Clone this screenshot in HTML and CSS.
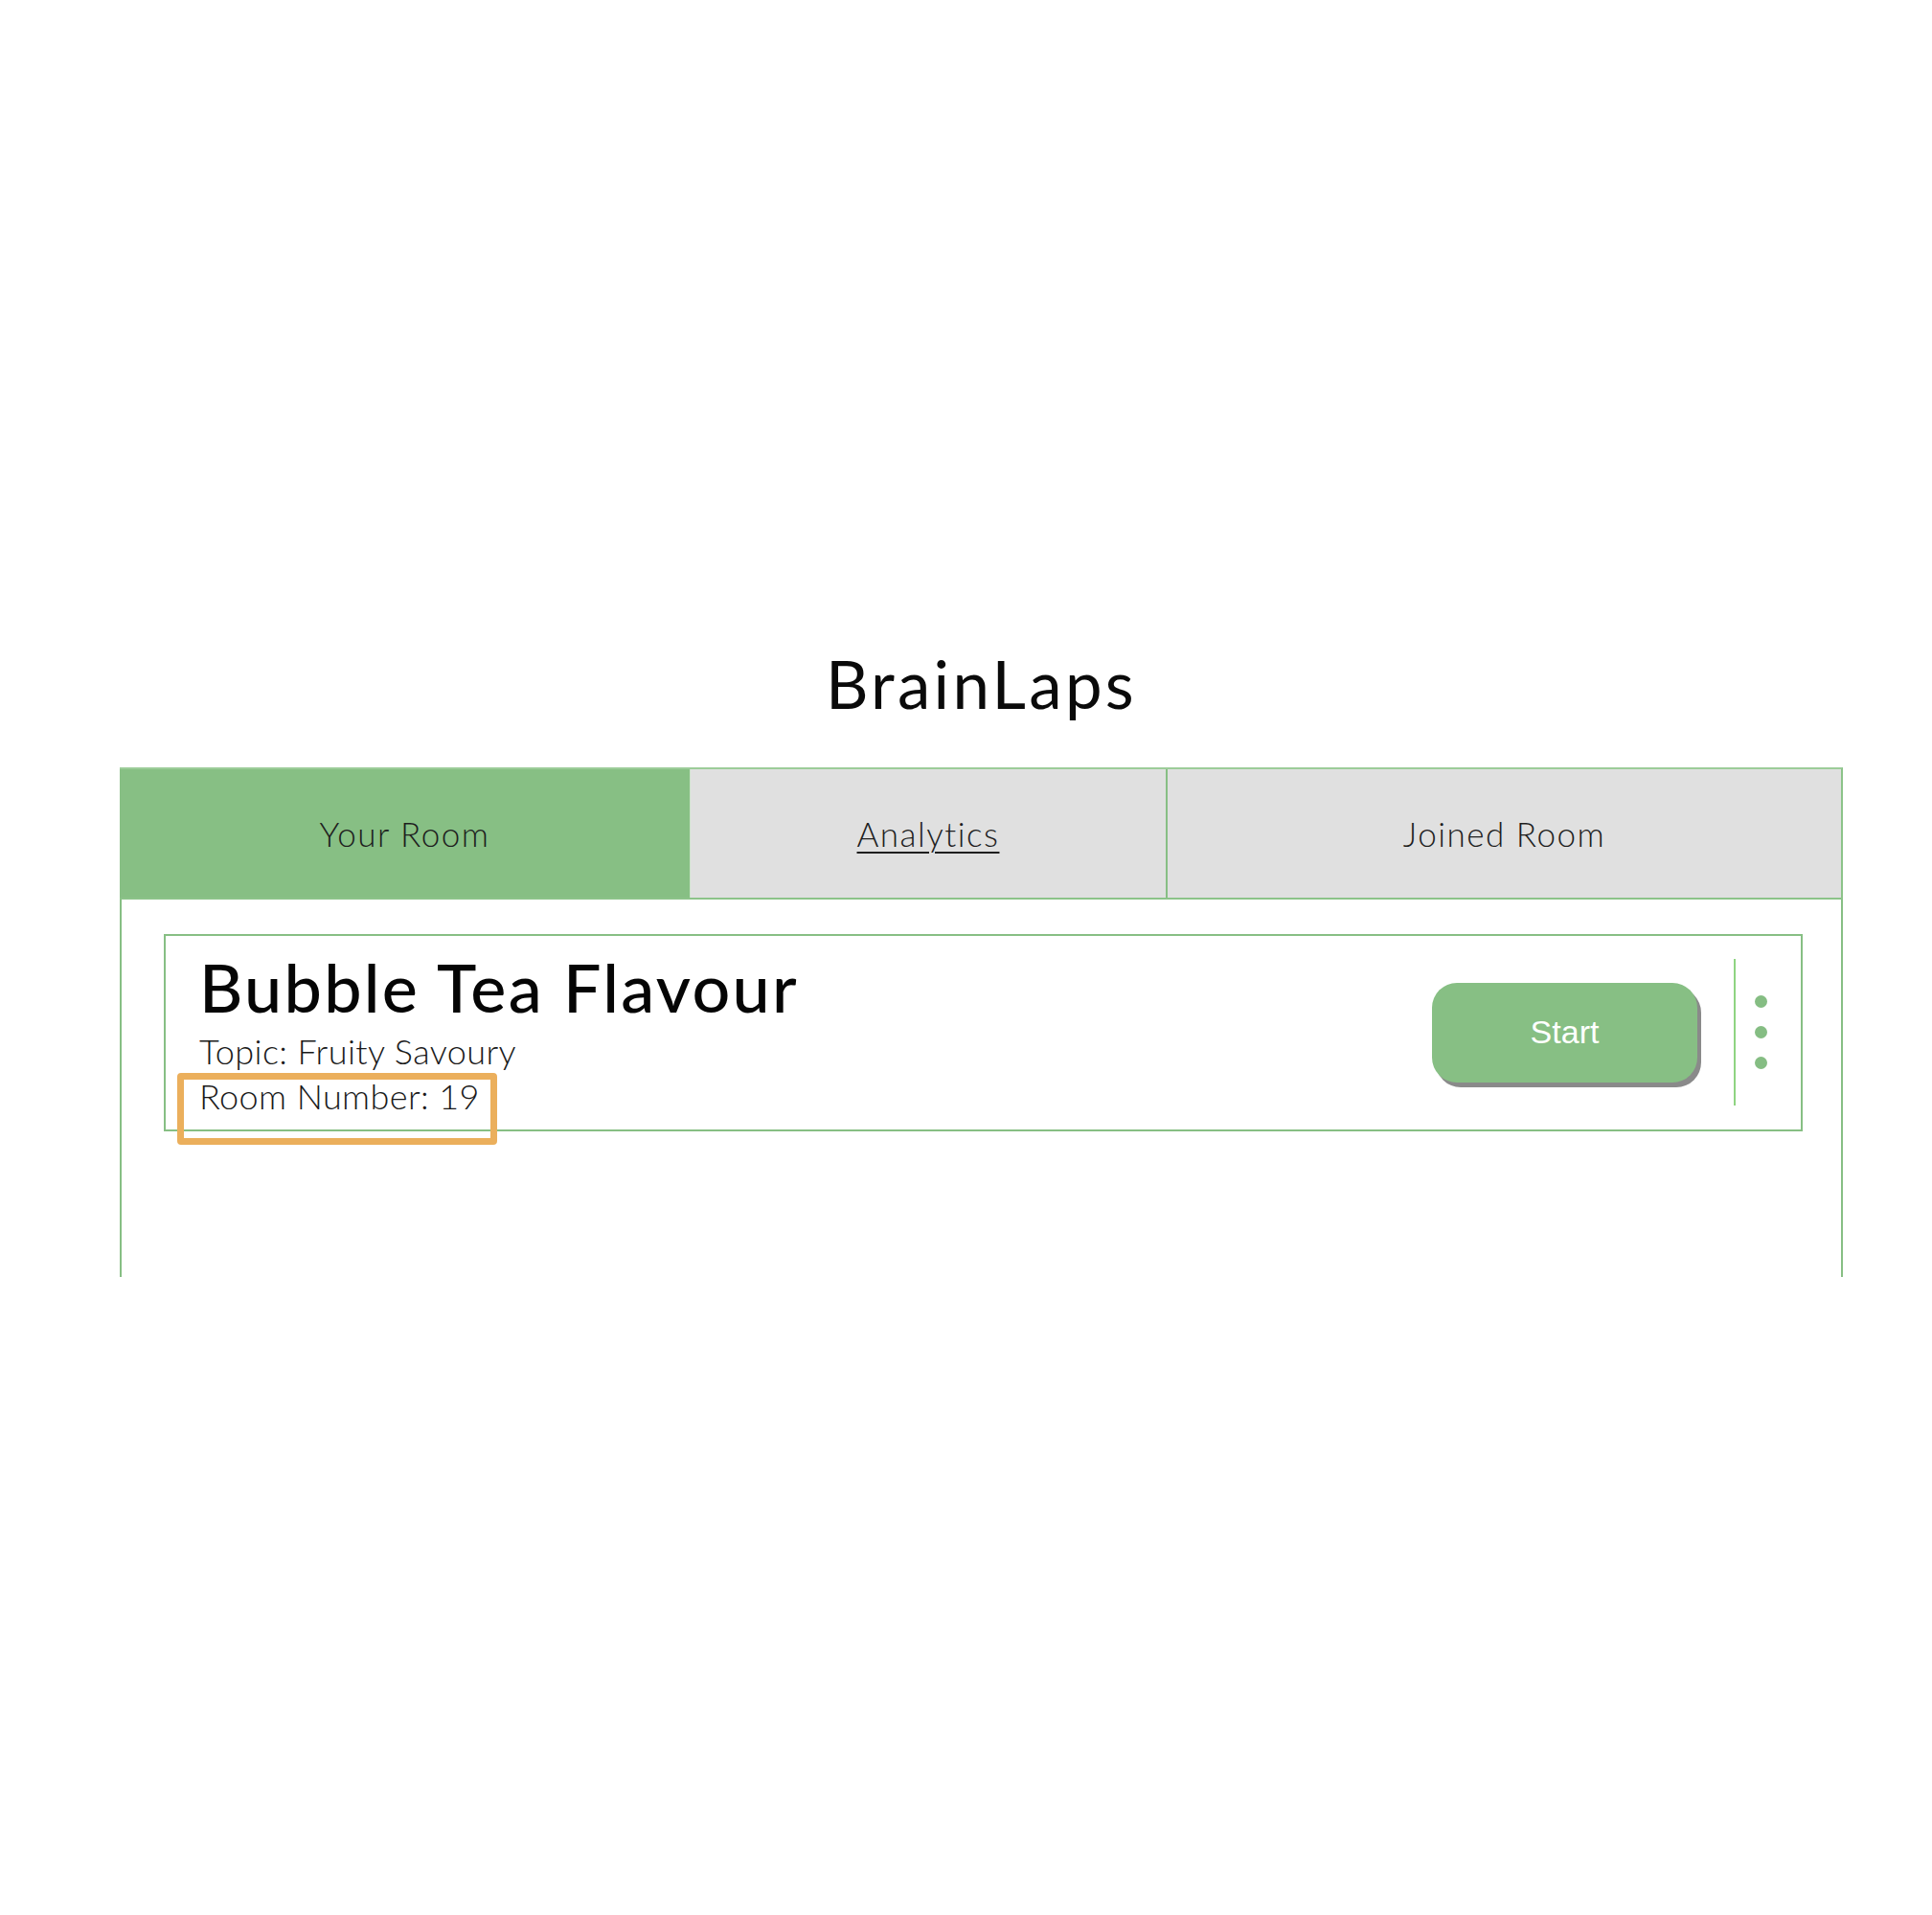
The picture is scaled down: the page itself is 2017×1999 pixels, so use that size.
FILE: index.html
```html
<!DOCTYPE html>
<html lang="en">
<head>
<meta charset="utf-8">
<title>BrainLaps</title>
<link rel="stylesheet" href="styles.css">
</head>
<body>
<div class="page">
  <h1 class="brand">BrainLaps</h1>
  <div class="tabs">
    <div class="tab tab-active">Your Room</div>
    <div class="tab tab-analytics"><span class="tab-link">Analytics</span></div>
    <div class="tab tab-joined">Joined Room</div>
  </div>
  <div class="panel">
    <div class="card">
      <div class="card-info">
        <div class="card-title">Bubble Tea Flavour</div>
        <div class="card-line">Topic: Fruity Savoury</div>
        <div class="card-line room-line">Room Number: 19<span class="highlight"></span></div>
      </div>
      <div class="card-actions">
        <button class="start-btn">Start</button>
        <div class="divider"></div>
        <div class="dots"><span class="dot"></span><span class="dot"></span><span class="dot"></span></div>
      </div>
    </div>
  </div>
</div>
</body>
</html>
```

FILE: styles.css
```css
html, body {
  margin: 0;
  padding: 0;
  background: #ffffff;
}

body {
  font-family: Lato, "Open Sans", "Noto Sans", sans-serif;
  color: #111;
}

.page {
  width: 1799px;
  margin-left: 125px;
  padding-top: 680px;
}

.brand {
  margin: 0;
  font-size: 69px;
  line-height: 68px;
  height: 121px;
  font-weight: 400;
  letter-spacing: 3.3px;
  text-align: center;
  color: #0a0a0a;
}

.tabs {
  display: flex;
  height: 138px;
  box-sizing: border-box;
  border-top: 2px solid #9ccc99;
  border-right: 2px solid #8cc389;
  border-bottom: 2px solid #8cc389;
}

.tab {
  display: flex;
  align-items: center;
  justify-content: center;
  font-size: 35px;
  font-weight: 300;
  letter-spacing: 1.5px;
  color: #1e1e1e;
  background: #e0e0e0;
  box-sizing: border-box;
}

.tab-active {
  width: 595px;
  background: #87bf84;
}

.tab-analytics {
  width: 497px;
  border-left: 1px solid #cde4cb;
}

.tab-link {
  text-decoration: underline;
  text-decoration-thickness: 2px;
  text-underline-offset: 5px;
}

.tab-joined {
  flex: 1;
  border-left: 2px solid #87bf84;
}

.panel {
  height: 394px;
  box-sizing: border-box;
  border-left: 2px solid #87bf84;
  border-right: 2px solid #87bf84;
  padding: 36px 40px 0 44px;
}

.card {
  display: flex;
  align-items: center;
  justify-content: space-between;
  border: 2px solid #87bf84;
  padding: 18px 35px 11px 35px;
}

.card-title {
  font-size: 70px;
  line-height: 70px;
  font-weight: 500;
  letter-spacing: 2.3px;
  color: #050505;
  margin-bottom: 9px;
}

.card-line {
  font-size: 36px;
  line-height: 47px;
  font-weight: 300;
  letter-spacing: 0.4px;
  color: #1a1a1a;
}

.room-line {
  position: relative;
  display: inline-block;
}

.highlight {
  position: absolute;
  left: -23px;
  top: -1px;
  width: 334px;
  height: 75px;
  box-sizing: border-box;
  border: 7px solid #ebaf5c;
  border-radius: 4px;
}

.card-actions {
  display: flex;
  align-items: center;
  margin-bottom: 8px;
}

.start-btn {
  width: 277px;
  height: 104px;
  border: none;
  border-radius: 26px;
  background: #87bf84;
  color: #ffffff;
  font-family: "Liberation Sans", Arial, sans-serif;
  font-size: 34px;
  box-shadow: 4px 5px 0 #8a8a8a;
  margin-right: 38px;
  padding: 0;
}

.divider {
  width: 2px;
  height: 153px;
  background: #8fd482;
  margin-right: 20px;
}

.dots {
  display: flex;
  flex-direction: column;
  gap: 19px;
}

.dot {
  display: block;
  width: 13px;
  height: 13px;
  border-radius: 50%;
  background: #85bd83;
}
```
